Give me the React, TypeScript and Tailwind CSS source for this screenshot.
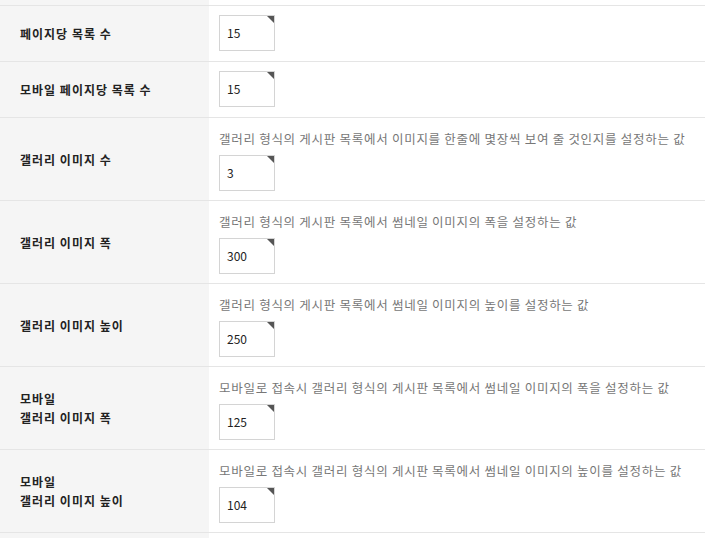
const font = { fontFamily: '"Malgun Gothic", "Noto Sans CJK KR", "Noto Sans", sans-serif' };

type Row = {
  label: string[];
  value: string;
  help?: string;
};

const rows: Row[] = [
  { label: ["페이지당 목록 수"], value: "15" },
  { label: ["모바일 페이지당 목록 수"], value: "15" },
  { label: ["갤러리 이미지 수"], value: "3", help: "갤러리 형식의 게시판 목록에서 이미지를 한줄에 몇장씩 보여 줄 것인지를 설정하는 값" },
  { label: ["갤러리 이미지 폭"], value: "300", help: "갤러리 형식의 게시판 목록에서 썸네일 이미지의 폭을 설정하는 값" },
  { label: ["갤러리 이미지 높이"], value: "250", help: "갤러리 형식의 게시판 목록에서 썸네일 이미지의 높이를 설정하는 값" },
  { label: ["모바일", "갤러리 이미지 폭"], value: "125", help: "모바일로 접속시 갤러리 형식의 게시판 목록에서 썸네일 이미지의 폭을 설정하는 값" },
  { label: ["모바일", "갤러리 이미지 높이"], value: "104", help: "모바일로 접속시 갤러리 형식의 게시판 목록에서 썸네일 이미지의 높이를 설정하는 값" },
];

function ValueBox({ value }: { value: string }) {
  return (
    <div className="relative flex h-[36px] w-[56px] items-center border border-[#d4d4d4] bg-white pl-[7px] text-[12px] text-[#222]">
      {value}
      <span className="absolute right-0 top-0 h-0 w-0 border-l-[7px] border-t-[7px] border-l-transparent border-t-[#555]" />
    </div>
  );
}

export default function App() {
  return (
    <div className="h-[538px] w-[705px] overflow-hidden bg-white" style={font}>
      <div className="flex h-[6px] border-b border-[#e5e5e5]">
        <div className="w-[209px] bg-[#f5f5f5]" />
        <div className="flex-1" />
      </div>
      {rows.map((row, i) => (
        <div key={i} className="flex border-b border-[#e5e5e5]">
          <div className="flex w-[209px] flex-col justify-center bg-[#f5f5f5] pl-[20px] text-[12px] font-bold leading-[19px] tracking-[1px] text-[#222]">
            {row.label.map((l) => (
              <div key={l}>{l}</div>
            ))}
          </div>
          {row.help ? (
            <div className="flex-1 pb-[9px] pl-[10px] pt-[10px]">
              <div className="h-[22px] whitespace-nowrap text-[12.5px] leading-[22px] tracking-[0.72px] text-[#777]">{row.help}</div>
              <div className="mt-[5px]">
                <ValueBox value={row.value} />
              </div>
            </div>
          ) : (
            <div className="flex-1 pb-[10px] pl-[10px] pt-[9px]">
              <ValueBox value={row.value} />
            </div>
          )}
        </div>
      ))}
      <div className="flex h-[10px]">
        <div className="w-[209px] bg-[#f5f5f5]" />
        <div className="flex-1" />
      </div>
    </div>
  );
}
